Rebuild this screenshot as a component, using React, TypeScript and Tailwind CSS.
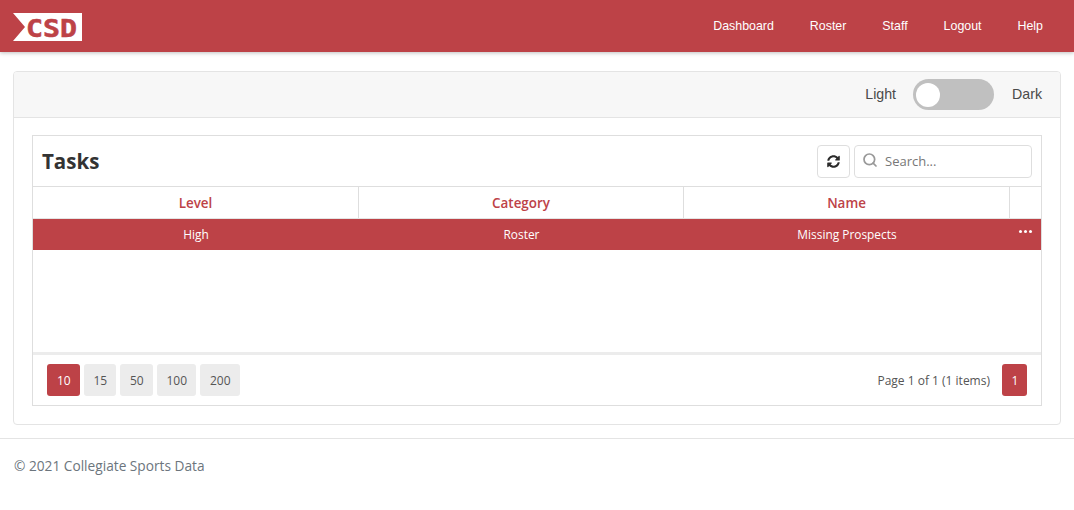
import React from "react";
import { Search } from "lucide-react";

const sans = "font-['Open_Sans','Noto_Sans',sans-serif]";

function Logo() {
  return (
    <svg width="69" height="28" viewBox="0 0 69 28" className="block mt-[2px]">
      <polygon points="0,0 69,0 69,28 0,28 12,14" fill="#ffffff" />
      <text x="13" y="23.5" fill="#bd4247" fontFamily="'DejaVu Sans Mono', monospace" fontWeight="700" fontSize="24" textLength="51" lengthAdjust="spacingAndGlyphs" stroke="#bd4247" strokeWidth="0.5">CSD</text>
    </svg>
  );
}

function Refresh() {
  return (
    <svg width="13" height="13" viewBox="0 0 512 512" fill="#2b2b2b">
      <path d="M370.72 133.28C339.46 104.01 298.9 87.97 255.85 88c-77.46.07-144.33 53.18-162.8 126.85-1.34 5.36-6.12 9.15-11.65 9.15H24.1c-7.5 0-13.2-6.81-11.82-14.18C33.94 94.92 134.8 8 256 8c66.46 0 126.8 26.14 171.31 68.69L463.03 40.97C478.15 25.85 504 36.56 504 57.94V192c0 13.25-10.75 24-24 24H345.94c-21.38 0-32.09-25.85-16.97-40.97l41.75-41.75zM32 296h134.06c21.38 0 32.09 25.85 16.97 40.97l-41.75 41.75c31.26 29.27 71.82 45.31 114.87 45.28 77.42-.07 144.32-53.15 162.8-126.85 1.34-5.36 6.12-9.15 11.65-9.15h57.3c7.5 0 13.2 6.81 11.82 14.18C478.06 417.08 377.2 504 256 504c-66.46 0-126.8-26.14-171.31-68.69L48.97 471.03C33.85 486.15 8 475.44 8 454.06V320c0-13.25 10.75-24 24-24z" />
    </svg>
  );
}

function Pager({ label, active, w }: { label: string; active?: boolean; w: string }) {
  return (
    <div className={`${w} h-[32px] flex items-center justify-center rounded-[3px] pt-[1px] pl-[1px] text-[12px] ${active ? "bg-[#bd4247] text-white" : "bg-[#ececec] text-[#555]"}`}>
      {label}
    </div>
  );
}

export default function App() {
  return (
    <div className="min-h-[510px] bg-white font-['Liberation_Sans',sans-serif]">
      <nav className="h-[52px] bg-[#bd4247] flex items-center justify-between pl-[13px] pr-[31px] shadow-[0_1px_4px_rgba(0,0,0,0.25)]">
        <Logo />
        <div className="flex items-center gap-[36px] pt-[1px] text-[12.4px] text-white">
          <span>Dashboard</span>
          <span>Roster</span>
          <span>Staff</span>
          <span>Logout</span>
          <span>Help</span>
        </div>
      </nav>

      <main className="px-[13px] pt-[19px]">
        <section className="border border-[#e4e4e4] rounded-[4px] h-[354px] overflow-hidden">
          <div className="h-[46px] bg-[#f7f7f7] border-b border-[#e4e4e4] flex items-center justify-end pr-[18px] text-[14.2px] text-[#4a4a4a]">
            <span>Light</span>
            <div className="ml-[17px] mr-[18px] w-[81px] h-[31px] rounded-full bg-[#c0c0c0] flex items-center pl-[3px]">
              <div className="w-[24px] h-[24px] rounded-full bg-white" />
            </div>
            <span>Dark</span>
          </div>

          <div className="px-[18px] pt-[17px]">
            <div className={`border border-[#dedede] h-[271px] flex flex-col ${sans}`}>
              <div className="h-[51px] flex items-center justify-between pl-[9px] pr-[9px] border-b border-[#dedede]">
                <h2 className="pt-[1px] text-[20.5px] font-bold text-[#333] leading-none">Tasks</h2>
                <div className="flex items-center gap-[4px]">
                  <div className="w-[33px] h-[33px] border border-[#dedede] rounded-[4px] flex items-center justify-center">
                    <Refresh />
                  </div>
                  <div className="w-[178px] h-[33px] border border-[#dedede] rounded-[4px] flex items-center pl-[7px] gap-[7px] text-[13px] text-[#777]">
                    <Search size={16} strokeWidth={2.6} className="text-[#999] -mt-[3px]" />
                    <span className="pt-[1px]">Search...</span>
                  </div>
                </div>
              </div>

              <div className="h-[32px] grid grid-cols-[326px_325px_326px_1fr] text-[13.4px] font-semibold text-[#bd4247] border-b border-[#e4e4e4]">
                <div className="flex items-center justify-center pt-[1px] border-r border-[#dedede]">Level</div>
                <div className="flex items-center justify-center pt-[1px] border-r border-[#dedede]">Category</div>
                <div className="flex items-center justify-center pt-[1px] border-r border-[#dedede]">Name</div>
                <div />
              </div>

              <div className="h-[31px] grid grid-cols-[326px_325px_326px_1fr] bg-[#bd4247] text-white text-[11.9px]">
                <div className="flex items-center justify-center pt-[1px]">High</div>
                <div className="flex items-center justify-center pt-[1px]">Roster</div>
                <div className="flex items-center justify-center pt-[1px]">Missing Prospects</div>
                <div className="flex items-start justify-center pt-[11px] gap-[2px]">
                  <span className="w-[3px] h-[3px] rounded-full bg-white" />
                  <span className="w-[3px] h-[3px] rounded-full bg-white" />
                  <span className="w-[3px] h-[3px] rounded-full bg-white" />
                </div>
              </div>

              <div className="flex-1" />

              <div className="h-[53px] border-t-[3px] border-[#ececec] flex items-center justify-between pl-[14px] pr-[14px]">
                <div className="flex items-center gap-[4px]">
                  <Pager label="10" active w="w-[32.5px]" />
                  <Pager label="15" w="w-[32.5px]" />
                  <Pager label="50" w="w-[32.5px]" />
                  <Pager label="100" w="w-[39.5px]" />
                  <Pager label="200" w="w-[39.5px]" />
                </div>
                <div className="flex items-center gap-[12px] text-[12px] text-[#555]">
                  <span className="pt-[1px]">Page 1 of 1 (1 items)</span>
                  <Pager label="1" active w="w-[25px]" />
                </div>
              </div>
            </div>
          </div>
        </section>
      </main>

      <footer className={`mt-[13px] border-t border-[#e4e4e4] pl-[14px] pt-[17px] text-[13.7px] text-[#6c757d] ${sans}`}>
        © 2021 Collegiate Sports Data
      </footer>
    </div>
  );
}
